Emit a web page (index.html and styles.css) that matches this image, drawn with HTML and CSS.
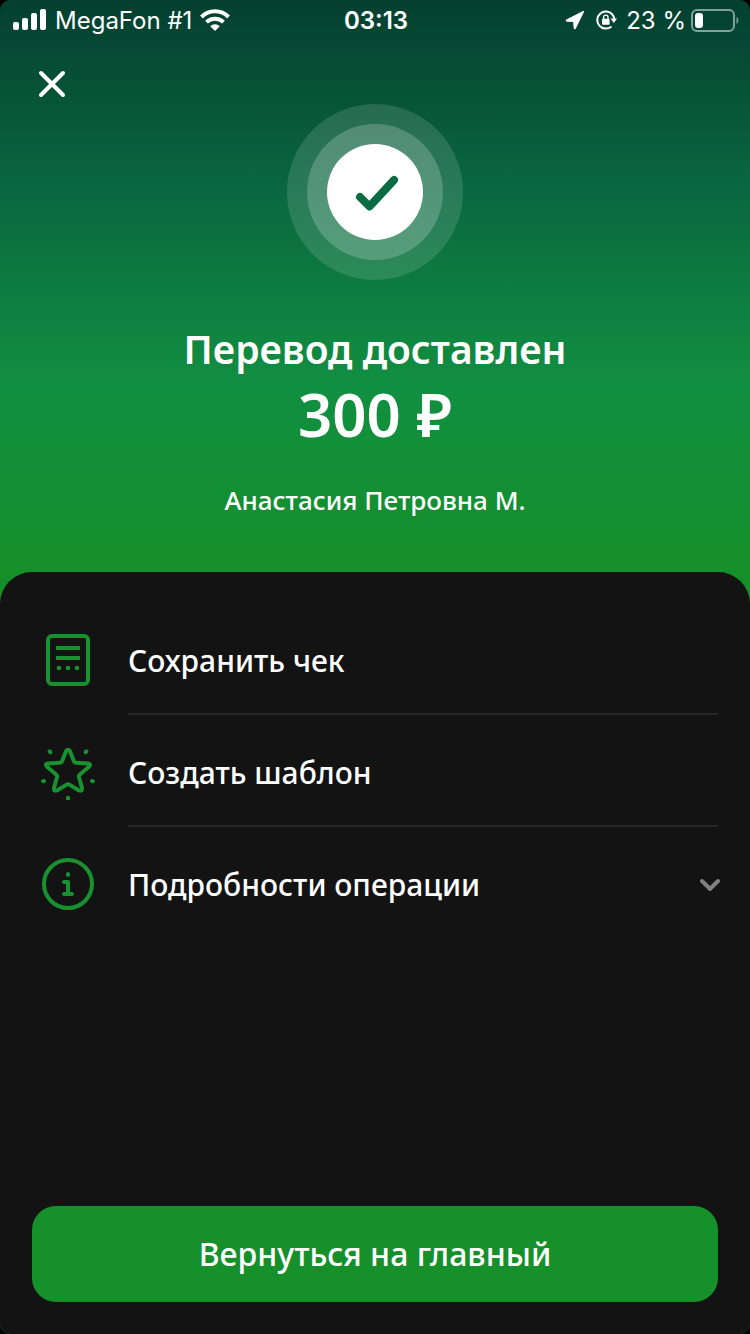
FILE: index.html
```html
<!DOCTYPE html>
<html lang="ru">
<head>
<meta charset="utf-8">
<meta name="viewport" content="width=device-width, initial-scale=1">
<title>Перевод доставлен</title>
<link rel="stylesheet" href="styles.css">
</head>
<body>
<div class="screen">
  <header class="status">
    <div class="status-left">
      <svg width="34" height="22" viewBox="0 0 34 22" fill="#fff" aria-hidden="true">
        <rect x="0" y="13" width="6" height="8" rx="2"/>
        <rect x="9" y="9" width="6" height="12" rx="2"/>
        <rect x="18" y="4" width="6" height="17" rx="2"/>
        <rect x="27" y="0" width="6" height="21" rx="2"/>
      </svg>
      <span>MegaFon #1</span>
      <svg width="30" height="22" viewBox="0 0 30 22" aria-hidden="true">
        <g fill="none" stroke="#fff" stroke-width="4">
          <path d="M1.500 8a19 19 0 0 1 27 0"/>
          <path d="M6.500 13.200a12 12 0 0 1 17 0"/>
        </g>
        <path fill="#fff" d="M10.200 17.200a6.800 6.800 0 0 1 9.600 0L15 22z"/>
      </svg>
    </div>
    <time class="status-time">03:13</time>
    <div class="status-right">
      <svg class="location" width="20" height="20" viewBox="0 0 20 20" aria-hidden="true">
        <path fill="#fff" stroke="#fff" stroke-width="1.500" stroke-linejoin="round" d="M18.300 1.700 1.700 10.200Q1.300 10.800 2 11L8.800 11.200 9.400 18Q9.700 18.800 10.300 18z"/>
      </svg>
      <svg class="lock" width="21" height="20" viewBox="0 0 21 20" aria-hidden="true">
        <path fill="none" stroke="#fff" stroke-width="2" d="M16.500 4.500A8.600 8.600 0 1 0 15.500 16.500M16.300 4.500A8.600 8.600 0 0 1 18.300 9"/>
        <path fill="#fff" d="M14.500 8.500h6.500l-3.200 4.500z"/>
        <rect x="6" y="8.800" width="7.600" height="6" rx="1" fill="#fff"/>
        <path fill="none" stroke="#fff" stroke-width="1.400" d="M7.600 9.500V7.300a2.200 2.200 0 0 1 4.400 0v2.200"/>
      </svg>
      <span>23 %</span>
      <svg width="48" height="23" viewBox="0 0 48 23" aria-hidden="true">
        <rect x="1" y="1" width="42" height="21" rx="5" fill="none" stroke="#fff" stroke-opacity=".5" stroke-width="2"/>
        <rect x="4" y="4" width="8" height="15" rx="3" fill="#fff"/>
        <path d="M45.500 8c2.500 1.500 2.500 5.500 0 7z" fill="#fff" fill-opacity=".5"/>
      </svg>
    </div>
  </header>

  <main class="main">
    <section class="hero">
      <button class="close" type="button" aria-label="Закрыть">
        <svg width="28" height="28" viewBox="0 0 28 28" fill="none" stroke="#fff" stroke-width="4" stroke-linecap="round">
          <path d="M3 3 25 25M25 3 3 25"/>
        </svg>
      </button>
      <svg class="badge" width="176" height="176" viewBox="0 0 176 176" aria-hidden="true">
        <circle cx="88" cy="88" r="88" fill="#fff" fill-opacity=".13"/>
        <circle cx="88" cy="88" r="68" fill="#fff" fill-opacity=".2"/>
        <circle cx="88" cy="88" r="48" fill="#fff"/>
        <path d="M73 93 82.500 102.500 107 76" fill="none" stroke="#0a6c42" stroke-width="8" stroke-linecap="round" stroke-linejoin="round"/>
      </svg>
      <h1 class="title">Перевод доставлен</h1>
      <p class="amount">300 ₽</p>
      <p class="name">Анастасия Петровна М.</p>
    </section>

    <section class="sheet">
      <ul class="actions">
        <li>
          <button class="action" type="button">
            <svg class="icon" width="56" height="56" viewBox="0 0 56 56" fill="none" stroke="#189130" stroke-width="4" aria-hidden="true">
              <rect x="8" y="4" width="40" height="48" rx="4"/>
              <path d="M16 16h24M16 26h24"/>
              <g fill="#189130" stroke="none"><circle cx="19" cy="36" r="2.300"/><circle cx="28" cy="36" r="2.300"/><circle cx="37" cy="36" r="2.300"/></g>
            </svg>
            <span class="label">Сохранить чек</span>
          </button>
        </li>
        <li>
          <button class="action" type="button">
            <svg class="icon" width="56" height="56" viewBox="0 0 56 56" fill="none" stroke="#189130" stroke-width="4" stroke-linejoin="round" stroke-linecap="round" aria-hidden="true">
              <path d="M26.200 7Q28 4.500 29.800 7L34 17.300Q34.500 18.600 36 18.700L48 19.500Q51.500 20 49 22.800L39.800 30.500Q38.700 31.500 39 33L42 44Q42.300 47.800 39 46.500L29.400 40.600Q28 39.800 26.600 40.600L17 46.500Q13.700 47.800 14 44L17 33Q17.300 31.500 16.200 30.500L7 22.800Q4.500 20 8 19.500L20 18.700Q21.500 18.600 22 17.300z"/>
              <path d="M9.700 7.300 10.400 8.200M46.300 7.300 45.600 8.200M3 37.300 4 37M53 37.300 52 37M28 53.800V54.800"/>
            </svg>
            <span class="label">Создать шаблон</span>
          </button>
        </li>
        <li>
          <button class="action" type="button" aria-expanded="false">
            <svg class="icon" width="56" height="56" viewBox="0 0 56 56" fill="none" stroke="#189130" stroke-width="4" stroke-linecap="round" stroke-linejoin="round" aria-hidden="true">
              <circle cx="28" cy="28" r="24"/>
              <path d="M24 26h4v12M24 38h8M28 18v1"/>
            </svg>
            <span class="label">Подробности операции</span>
            <svg class="chevron" width="20" height="14" viewBox="0 0 20 14" fill="none" stroke="#808080" stroke-width="4" stroke-linecap="round" aria-hidden="true">
              <path d="M2 4 10 12 18 4"/>
            </svg>
          </button>
        </li>
      </ul>
      <button class="primary" type="button">Вернуться на главный</button>
    </section>
  </main>
</div>
</body>
</html>
```
FILE: styles.css
```css
* {
  box-sizing: border-box;
}

body {
  margin: 0;
  background: #000;
  color: #fff;
  font-family: "Noto Sans", "Open Sans", sans-serif;
}

button {
  border: 0;
  padding: 0;
  background: none;
  color: inherit;
  font: inherit;
  cursor: pointer;
}

svg {
  flex: none;
}

.screen {
  display: flex;
  flex-direction: column;
  min-height: 100vh;
  overflow: hidden;
  border-radius: 10px;
  background: linear-gradient(#043f30 0, #0a6840 192px, #118f41 384px, #159029 576px);
}

.status {
  display: grid;
  grid-template-columns: 1fr auto 1fr;
  align-items: center;
  height: 40px;
  padding: 0 11px 0 13px;
  font-family: Inter, sans-serif;
  font-size: 24px;
}

.status-left,
.status-right {
  display: flex;
  align-items: center;
  gap: 8px;
}

.status-right {
  justify-content: flex-end;
  gap: 5px;
}

.status-time {
  font-weight: 600;
}

.location {
  margin-right: 6px;
}

.lock {
  margin-right: 4px;
}

.main {
  display: flex;
  flex: 1;
  flex-direction: column;
}

.hero {
  display: flex;
  flex-direction: column;
  align-items: center;
  padding: 24px 32px 54px;
  text-align: center;
}

.close {
  display: grid;
  place-items: center;
  align-self: flex-start;
  width: 40px;
  height: 40px;
}

.badge {
  display: block;
}

.title {
  margin: 42px 0 0;
  font-size: 39px;
  font-weight: 600;
  line-height: 54px;
}

.amount {
  margin: 0;
  font-size: 60px;
  font-weight: 600;
  line-height: 76px;
}

.name {
  margin: 30px 0 0;
  font-size: 26px;
  font-weight: 500;
  line-height: 36px;
}

.sheet {
  display: flex;
  flex: 1;
  flex-direction: column;
  justify-content: space-between;
  padding: 31px 32px 32px;
  border-radius: 32px 32px 0 0;
  background: #131313;
}

.actions {
  margin: 0;
  padding: 0;
  list-style: none;
}

.action {
  position: relative;
  display: flex;
  align-items: center;
  gap: 32px;
  width: 100%;
  height: 112px;
  padding: 2px 0 0 8px;
  text-align: left;
}

.actions li:not(:last-child) .action::after {
  position: absolute;
  right: 0;
  bottom: 0;
  left: 96px;
  height: 2px;
  background: #252525;
  content: "";
}

.label {
  flex: 1;
  padding-top: 2px;
  font-size: 30px;
  font-weight: 500;
  line-height: 40px;
}

.chevron {
  margin-right: -2px;
}

.primary {
  min-height: 96px;
  padding-bottom: 2px;
  border-radius: 24px;
  background: #16902b;
  font-size: 32px;
  font-weight: 500;
}
```
